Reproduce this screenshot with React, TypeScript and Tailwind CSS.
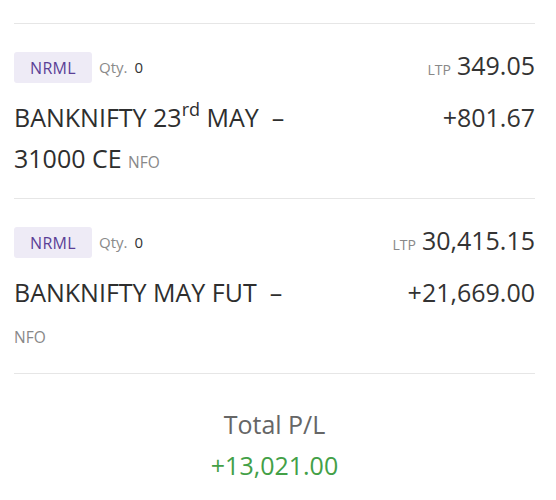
import React from 'react'

type Position = {
  product: string
  qty: number
  ltp: string
  name: React.ReactNode
  exchange: string
  pnl: string
}

const positions: Position[] = [
  {
    product: 'NRML',
    qty: 0,
    ltp: '349.05',
    name: (
      <>
        BANKNIFTY 23<sup className="text-[18px] relative -top-[2px] align-super leading-none">rd</sup> MAY&nbsp; – 31000 CE
      </>
    ),
    exchange: 'NFO',
    pnl: '+801.67',
  },
  {
    product: 'NRML',
    qty: 0,
    ltp: '30,415.15',
    name: <>BANKNIFTY MAY FUT&nbsp; –</>,
    exchange: 'NFO',
    pnl: '+21,669.00',
  },
]

function PositionRow({ p }: { p: Position }) {
  return (
    <div className="border-t border-[#e6e6e6] pt-[28px] pb-[15px]">
      {/* product / qty / ltp */}
      <div className="flex items-center justify-between h-[31px]">
        <div className="flex items-center">
          <span className="bg-[#eeebf6] text-[#5b3f96] text-[16px] rounded-[3px] h-[31px] w-[78px] flex items-center justify-center tracking-[0.3px]">
            {p.product}
          </span>
          <span className="ml-[7px] text-[15px] text-[#8a8a8a]">Qty.</span>
          <span className="ml-[7px] text-[15px] text-[#333]">{p.qty}</span>
        </div>
        <div className="flex items-baseline -mt-[3px]">
          <span className="text-[14px] text-[#888] mr-[6px]">LTP</span>
          <span className="text-[25px] text-[#333]">{p.ltp}</span>
        </div>
      </div>

      {/* instrument + pnl */}
      <div className="flex justify-between mt-[14px] leading-[41px]">
        <div className="w-[292px] text-[25px] text-[#2e2e2e]">
          {p.name} <span className="text-[15.5px] text-[#888]">{p.exchange}</span>
        </div>
        <div className="text-[25px] text-[#333]">{p.pnl}</div>
      </div>
    </div>
  )
}

export default function App() {
  return (
    <div
      className="w-[556px] h-[500px] bg-white overflow-hidden"
      style={{ fontFamily: '"Open Sans", "Noto Sans", sans-serif' }}
    >
      <div className="mx-[14px] w-[521px] pt-[23px]">
        {positions.map((p, i) => (
          <PositionRow key={i} p={p} />
        ))}

        <div className="border-t border-[#e6e6e6] pt-[34px] flex flex-col items-center">
          <div className="text-[25px] leading-[32px] text-[#666]">Total P/L</div>
          <div className="text-[25px] leading-[32px] text-[#43a047] mt-[9px]">+13,021.00</div>
        </div>
      </div>
    </div>
  )
}
